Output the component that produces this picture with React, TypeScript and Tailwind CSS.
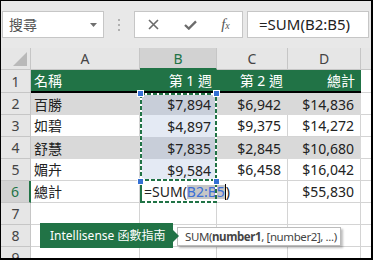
import React from "react";

const FONT = "font-['Noto_Sans','Noto_Sans_CJK_TC',sans-serif]";

type Row = {
  n: string;
  a: string;
  b: string;
  c: string;
  d: string;
  gray?: boolean;
};

const rows: Row[] = [
  { n: "2", a: "百勝", b: "$7,894", c: "$6,942", d: "$14,836", gray: true },
  { n: "3", a: "如碧", b: "$4,897", c: "$9,375", d: "$14,272" },
  { n: "4", a: "舒慧", b: "$7,835", c: "$2,845", d: "$10,680", gray: true },
  { n: "5", a: "媚卉", b: "$9,584", c: "$6,458", d: "$16,042" },
];

function RowHead({ n, active }: { n: string; active?: boolean }) {
  return (
    <div
      className={
        active
          ? "w-[30px] shrink-0 h-full flex items-center justify-center bg-[#d2d2d2] text-[#217346] border-r-2 border-r-[#217346] border-b border-b-[#c6c6c6] text-[14px]"
          : "w-[30px] shrink-0 h-full flex items-center justify-center bg-[#e6e6e6] text-[#444] border-r border-b border-[#c6c6c6] text-[14px]"
      }
    >
      {n}
    </div>
  );
}

export default function App() {
  return (
    <div className={`w-[373px] h-[260px] bg-black pt-[1px] pl-[1px] pr-[2px] pb-[2px] ${FONT}`}>
      <div className="relative w-[370px] h-[257px] bg-[#e8e8e8] overflow-hidden">
        {/* top bar */}
        <div className="h-[47px] flex items-start pt-[10px]">
          <div className="ml-[1px] w-[102px] h-[27px] bg-white border border-[#c6c6c6] flex items-center justify-between pl-[6px] pr-[6px]">
            <span className="text-[14px] text-[#555] leading-none">搜尋</span>
            <svg width="7" height="4" viewBox="0 0 7 4">
              <path d="M0 0 L7 0 L3.5 4 Z" fill="#6f6f6f" />
            </svg>
          </div>
          <div className="w-[30px] h-[27px] flex flex-col items-center justify-center gap-[3px]">
            <div className="w-[2px] h-[2px] bg-[#b0b0b0]" />
            <div className="w-[2px] h-[2px] bg-[#b0b0b0]" />
            <div className="w-[2px] h-[2px] bg-[#b0b0b0]" />
          </div>
          <div className="w-[109px] h-[27px] bg-white border border-[#c6c6c6] flex items-center">
            <div className="w-[37px] flex items-center justify-center">
              <svg width="11" height="11" viewBox="0 0 11 11">
                <path d="M1 1 L10 10 M10 1 L1 10" stroke="#6b6b6b" strokeWidth="1.6" />
              </svg>
            </div>
            <div className="w-[37px] flex items-center justify-center">
              <svg width="13" height="10" viewBox="0 0 13 10">
                <path d="M1 5 L4.8 8.6 L12 1.4" stroke="#6b6b6b" strokeWidth="2.3" fill="none" />
              </svg>
            </div>
            <div className="w-[33px] flex items-center justify-center text-[#555] font-['Liberation_Serif',serif] italic leading-none">
              <span className="text-[15px]">f</span>
              <span className="text-[10px] mt-[3px]">x</span>
            </div>
          </div>
          <div className="ml-[4px] w-[122px] h-[27px] bg-white border border-[#c6c6c6] flex items-center pl-[11px]">
            <span className="text-[15px] text-[#222] leading-none">=SUM(B2:B5)</span>
          </div>
        </div>

        {/* grid */}
        <div className="flex flex-col text-[14px] text-[#222]">
          {/* column headers */}
          <div className="flex h-[22px]">
            <div className="w-[30px] shrink-0 h-full bg-[#e6e6e6] border-r border-b border-[#c6c6c6] relative">
              <svg className="absolute right-[3px] bottom-[3px]" width="14" height="14" viewBox="0 0 14 14">
                <path d="M14 0 L14 14 L0 14 Z" fill="#b9b9b9" />
              </svg>
            </div>
            <div className="w-[109px] shrink-0 h-full bg-[#e6e6e6] border-r border-b border-[#c6c6c6] flex items-center justify-center text-[#444]">A</div>
            <div className="w-[77px] shrink-0 h-full bg-[#d2d2d2] border-r border-r-[#c6c6c6] border-b-2 border-b-[#217346] flex items-center justify-center text-[#217346]">B</div>
            <div className="w-[71px] shrink-0 h-full bg-[#e6e6e6] border-r border-b border-[#c6c6c6] flex items-center justify-center text-[#444]">C</div>
            <div className="w-[73px] shrink-0 h-full bg-[#e6e6e6] border-r border-b border-[#c6c6c6] flex items-center justify-center text-[#444]">D</div>
            <div className="w-[10px] shrink-0 h-full bg-[#e6e6e6] border-b border-[#c6c6c6]" />
          </div>

          {/* row 1 */}
          <div className="flex h-[23px]">
            <RowHead n="1" />
            <div className="w-[330px] shrink-0 h-full bg-[#217346] border-b-2 border-black flex text-white">
              <div className="w-[109px] flex items-center pl-[3px]">名稱</div>
              <div className="w-[77px] flex items-center justify-end pr-[5px]">第 1 週</div>
              <div className="w-[71px] flex items-center justify-end pr-[5px]">第 2 週</div>
              <div className="w-[73px] flex items-center justify-end pr-[6px]">總計</div>
            </div>
            <div className="w-[10px] shrink-0 h-full bg-white border-b border-[#d4d4d4]" />
          </div>

          {rows.map((r) => (
            <div key={r.n} className="flex h-[22px]">
              <RowHead n={r.n} />
              {r.gray ? (
                <>
                  <div className="w-[109px] shrink-0 h-full bg-[#d9d9d9] flex items-center pl-[3px]">{r.a}</div>
                  <div className="w-[77px] shrink-0 h-full bg-[#c8ced9] flex items-center justify-end pr-[6px]">{r.b}</div>
                  <div className="w-[71px] shrink-0 h-full bg-[#d9d9d9] flex items-center justify-end pr-[7px]">{r.c}</div>
                  <div className="w-[73px] shrink-0 h-full bg-[#d9d9d9] flex items-center justify-end pr-[7px]">{r.d}</div>
                </>
              ) : (
                <>
                  <div className="w-[109px] shrink-0 h-full bg-white border-r border-b border-[#d4d4d4] flex items-center pl-[3px]">{r.a}</div>
                  <div className="w-[77px] shrink-0 h-full bg-[#e4eaf4] flex items-center justify-end pr-[6px]">{r.b}</div>
                  <div className="w-[71px] shrink-0 h-full bg-white border-r border-b border-[#d4d4d4] flex items-center justify-end pr-[6px]">{r.c}</div>
                  <div className="w-[73px] shrink-0 h-full bg-white border-r border-b border-[#d4d4d4] flex items-center justify-end pr-[6px]">{r.d}</div>
                </>
              )}
              <div className="w-[10px] shrink-0 h-full bg-white border-b border-[#d4d4d4]" />
            </div>
          ))}

          {/* row 6 */}
          <div className="flex h-[22px]">
            <RowHead n="6" active />
            <div className="w-[109px] shrink-0 h-full bg-white border-r border-b border-[#d4d4d4] flex items-center pl-[3px]">總計</div>
            <div className="w-[77px] shrink-0 h-full bg-white flex items-center pl-[4px] whitespace-nowrap overflow-visible">
              <span className="relative z-10 flex items-center leading-none">
                =SUM(
                <span className="bg-[#c6c6c6] text-[#3b6fd6] px-[0px]">B2:B5</span>
                <span className="w-[1px] h-[16px] bg-black" />
                )
              </span>
            </div>
            <div className="w-[71px] shrink-0 h-full bg-white border-r border-b border-[#d4d4d4]" />
            <div className="w-[73px] shrink-0 h-full bg-white border-r border-b border-[#d4d4d4] flex items-center justify-end pr-[6px]">$55,830</div>
            <div className="w-[10px] shrink-0 h-full bg-white border-b border-[#d4d4d4]" />
          </div>

          {["7", "8", "9"].map((n) => (
            <div key={n} className="flex h-[22px]">
              <RowHead n={n} />
              <div className="w-[109px] shrink-0 h-full bg-white border-r border-b border-[#d4d4d4]" />
              <div className="w-[77px] shrink-0 h-full bg-white border-r border-b border-[#d4d4d4]" />
              <div className="w-[71px] shrink-0 h-full bg-white border-r border-b border-[#d4d4d4]" />
              <div className="w-[73px] shrink-0 h-full bg-white border-r border-b border-[#d4d4d4]" />
              <div className="w-[10px] shrink-0 h-full bg-white border-b border-[#d4d4d4]" />
            </div>
          ))}
        </div>

        {/* marquee overlay */}
        <svg
          className="absolute left-0 top-0 pointer-events-none z-20"
          width="370"
          height="257"
          viewBox="1 1 370 257"
        >
          <rect x="141" y="94" width="75" height="86" fill="none" stroke="#ffffff" strokeWidth="2" />
          <rect x="141" y="94" width="75" height="86" fill="none" stroke="#217346" strokeWidth="2" strokeDasharray="4 2" />
          <path d="M141 182 L141 203" stroke="#217346" strokeWidth="2" />
          <path d="M141 202 L216 202 L216 182" fill="none" stroke="#ffffff" strokeWidth="2" />
          <path d="M141 202 L216 202 L216 182" fill="none" stroke="#217346" strokeWidth="2" strokeDasharray="4 2" />
          {[
            [140.5, 93.5],
            [216.5, 93.5],
            [140.5, 181.5],
            [216.5, 181.5],
          ].map(([x, y], i) => (
            <rect key={i} x={x - 3} y={y - 3} width="6" height="6" fill="#3470d4" stroke="#ffffff" strokeWidth="1" />
          ))}
        </svg>

        {/* callout */}
        <div className="absolute left-[39px] top-[222px] z-30 flex items-center">
          <div className="w-[133px] h-[25px] bg-[#217346] text-white text-[12px] flex items-center pl-[10px] whitespace-nowrap">
            Intellisense 函數指南
          </div>
          <svg width="6" height="12" viewBox="0 0 6 12">
            <path d="M0 0 L6 6 L0 12 Z" fill="#217346" />
          </svg>
        </div>

        {/* tooltip */}
        <div className="absolute left-[176px] top-[226px] z-20 h-[19px] w-[164px] bg-white border border-[#bcbcbc] shadow-[2px_2px_2px_rgba(0,0,0,0.25)] flex items-center pl-[7px] text-[11.5px] tracking-[-0.4px] text-[#444] whitespace-nowrap">
          SUM(<span className="font-bold">number1</span>, [number2], ...)
        </div>
      </div>
    </div>
  );
}
